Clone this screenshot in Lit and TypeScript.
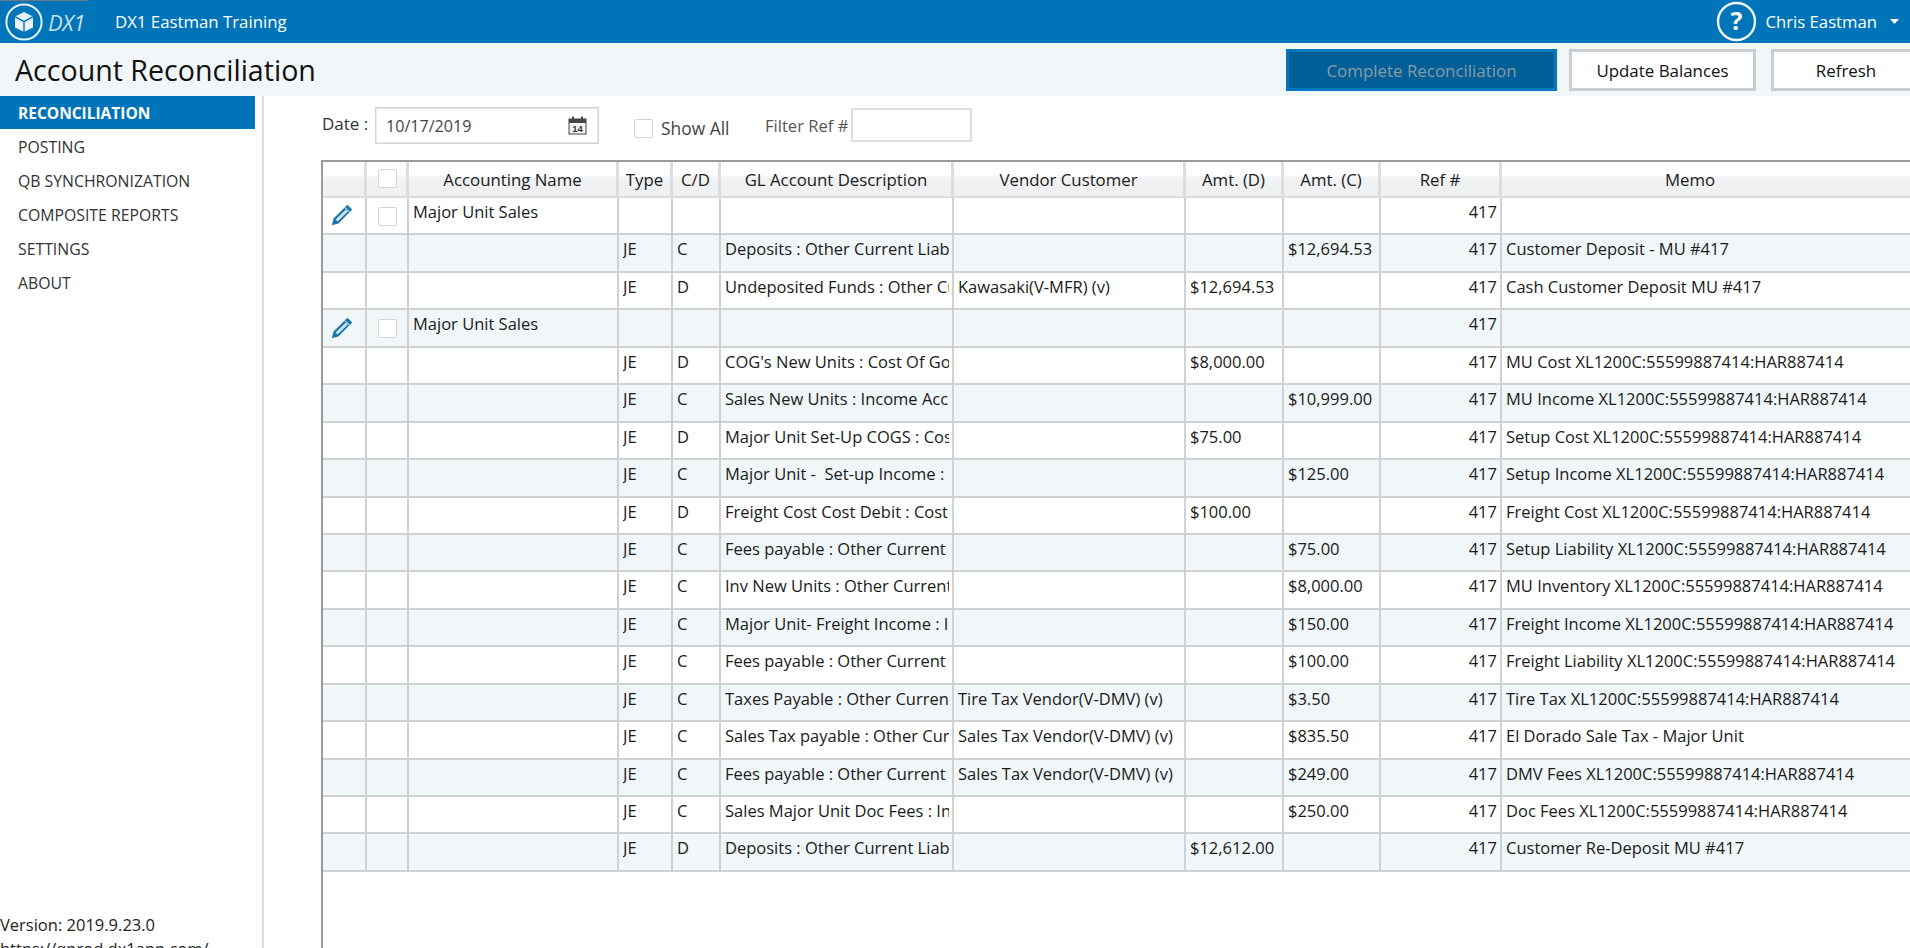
import { LitElement, html, css, svg } from "lit";
import { customElement } from "lit/decorators.js";

type Row = { parent?: boolean; name?: string; type?: string; cd?: string; gl?: string; vendor?: string; d?: string; c?: string; memo?: string };

const SFX = "XL1200C:55599887414:HAR887414";
const ROWS: Row[] = [
  { parent: true, name: "Major Unit Sales" },
  { type: "JE", cd: "C", gl: "Deposits : Other Current Liabilities", c: "$12,694.53", memo: "Customer Deposit - MU #417" },
  { type: "JE", cd: "D", gl: "Undeposited Funds : Other Current Assets", vendor: "Kawasaki(V-MFR) (v)", d: "$12,694.53", memo: "Cash Customer Deposit MU #417" },
  { parent: true, name: "Major Unit Sales" },
  { type: "JE", cd: "D", gl: "COG's New Units : Cost Of Goods Sold", d: "$8,000.00", memo: `MU Cost ${SFX}` },
  { type: "JE", cd: "C", gl: "Sales New Units : Income Account", c: "$10,999.00", memo: `MU Income ${SFX}` },
  { type: "JE", cd: "D", gl: "Major Unit Set-Up COGS : Cost Of Goods", d: "$75.00", memo: `Setup Cost ${SFX}` },
  { type: "JE", cd: "C", gl: "Major Unit -  Set-up Income : Income", c: "$125.00", memo: `Setup Income ${SFX}` },
  { type: "JE", cd: "D", gl: "Freight Cost Cost Debit : Cost Of Goods", d: "$100.00", memo: `Freight Cost ${SFX}` },
  { type: "JE", cd: "C", gl: "Fees payable : Other Current Liabilities", c: "$75.00", memo: `Setup Liability ${SFX}` },
  { type: "JE", cd: "C", gl: "Inv New Units : Other Current Assets", c: "$8,000.00", memo: `MU Inventory ${SFX}` },
  { type: "JE", cd: "C", gl: "Major Unit- Freight Income : Income", c: "$150.00", memo: `Freight Income ${SFX}` },
  { type: "JE", cd: "C", gl: "Fees payable : Other Current Liabilities", c: "$100.00", memo: `Freight Liability ${SFX}` },
  { type: "JE", cd: "C", gl: "Taxes Payable : Other Current Liabilities", vendor: "Tire Tax Vendor(V-DMV) (v)", c: "$3.50", memo: `Tire Tax ${SFX}` },
  { type: "JE", cd: "C", gl: "Sales Tax payable : Other Current Liabilities", vendor: "Sales Tax Vendor(V-DMV) (v)", c: "$835.50", memo: "El Dorado Sale Tax - Major Unit" },
  { type: "JE", cd: "C", gl: "Fees payable : Other Current Liabilities", vendor: "Sales Tax Vendor(V-DMV) (v)", c: "$249.00", memo: `DMV Fees ${SFX}` },
  { type: "JE", cd: "C", gl: "Sales Major Unit Doc Fees : Income", c: "$250.00", memo: `Doc Fees ${SFX}` },
  { type: "JE", cd: "D", gl: "Deposits : Other Current Liabilities", d: "$12,612.00", memo: "Customer Re-Deposit MU #417" },
];

const NAV = ["RECONCILIATION", "POSTING", "QB SYNCHRONIZATION", "COMPOSITE REPORTS", "SETTINGS", "ABOUT"];

const pencil = svg`<svg class="pencil" width="22" height="22" viewBox="0 0 22 22">
  <path d="M16.4 .8 21.2 5.6 7.4 19.4 .8 21.2 2.6 14.6Z" fill="#1b76ab"/>
  <path d="M14.8 5.4 16.8 7.4 6.6 17.4 4.6 15.4Z" fill="#cfe3ef"/>
  <path d="M13.8 3.4 18.6 8.2" stroke="#fff" stroke-width="1"/>
</svg>`;

@customElement("app-root")
export class AppRoot extends LitElement {
  static styles = css`
    :host {
      display: block;
      position: relative;
      width: 1910px;
      height: 948px;
      overflow: hidden;
      background: #fff;
      color: #111;
      font-family: "Open Sans", "Noto Sans", sans-serif;
      font-size: 16.5px;
    }
    .notch { position: absolute; left: 0; top: 0; width: 88px; height: 1px; background: #6a7a86; }
    .top {
      height: 43px;
      background: #0074b8;
      color: #fff;
      display: flex;
      align-items: center;
    }
    .logo { margin-left: 5px; display: block; }
    .dx { font-style: italic; font-size: 22px; letter-spacing: -0.5px; color: #c9dfee; margin-left: 5px; width: 67px; }
    .org { font-size: 16.8px; }
    .spacer { flex: 1; }
    .help { display: block; margin-right: 9px; }
    .user { font-size: 16.7px; }
    .caret { display: block; margin: 0 11px 0 13px; }

    .titlebar {
      height: 53px;
      background: #f1f6f9;
      display: flex;
      align-items: flex-start;
    }
    h1 { margin: 0 0 0 15px; font-weight: 400; font-size: 28.6px; line-height: 36px; padding-top: 9px; flex: 1; color: #111; }
    .btn {
      box-sizing: border-box;
      height: 42px;
      margin-top: 6px;
      border: 3px solid #c9ced3;
      background: #fff;
      font: inherit;
      font-size: 16.9px;
      color: #111;
      padding: 0;
      display: flex;
      align-items: center;
      justify-content: center;
    }
    .btn.primary { width: 271px; background: #005f97; border-color: #0079c0; color: #8b9ba6; margin-right: 12px; }
    .btn.update { width: 187px; margin-right: 15px; }
    .btn.refresh { width: 150px; margin-right: -11px; }

    .body { display: flex; height: 865px; }
    .side {
      width: 262px;
      border-right: 2px solid #dcdcdc;
      display: flex;
      flex-direction: column;
      flex: none;
    }
    .nav { width: 255px; height: 34px; padding: 2px 0 0 18px; box-sizing: border-box; display: flex; align-items: center; font-size: 15.8px; color: #333; }
    .nav.on { height: 33px; padding-top: 0; background: #0074b8; color: #fff; font-weight: 700; font-size: 15.5px; }
    .foot { margin-top: auto; line-height: 24px; font-size: 16.5px; color: #222; white-space: nowrap; }

    .main { flex: 1; min-width: 0; padding-left: 57px; }
    .tools { height: 64px; display: flex; align-items: flex-start; color: #333; }
    .date-label { margin: 17px 0 0 1px; width: 53px; font-size: 17px; line-height: 22px; white-space: nowrap; }
    .date {
      box-sizing: border-box;
      width: 224px;
      height: 37px;
      margin-top: 11px;
      border: 1px solid #d2d5d8;
      outline: 1px solid #e6e8ea;
      outline-offset: -2px;
      padding: 0 11px 0 10px;
      display: flex;
      align-items: center;
      justify-content: space-between;
      color: #444;
      font-size: 16.1px;
    }
    .check { box-sizing: border-box; width: 19px; height: 19px; border: 1.5px solid #d3d6d8; border-radius: 2px; background: #fff; flex: none; }
    .showall { display: flex; align-items: center; width: 131px; margin: 20px 0 0 35px; gap: 8px; font-size: 17.4px; color: #444; }
    .filter { display: flex; align-items: center; margin: 12px 0 0 0; gap: 3px; font-size: 16.6px; color: #555; }
    .filter-input { box-sizing: border-box; width: 121px; height: 34px; border: 2px solid #dcdee0; background: #fff; }

    .grid {
      width: 1700px;
      border-left: 2px solid #9a9a9a;
      border-top: 2px solid #9a9a9a;
      height: 800px;
    }
    .row {
      display: grid;
      grid-template-columns: 44px 42px 210px 54px 48px 233px 232px 98px 97px 121px 1fr;
      height: 37.44px;
      box-sizing: border-box;
      border-bottom: 2px solid #cfd2d4;
    }
    .row.alt { background: #f1f6f9; }
    .row.head {
      height: 36px;
      background: linear-gradient(#fff 0, #fff 13px, #f1f2f3 16px, #eff0f1 100%);
      border-bottom: 2px solid #dcdddf;
    }
    .c {
      min-width: 0;
      box-sizing: border-box;
      border-right: 2px solid #cfd2d4;
      padding: 2px 3px 0 4px;
      line-height: 24px;
      font-size: 16.5px;
      color: #1a1a1a;
    }
    .row.head .c {
      border-right: 3px solid #dcdddf;
      text-align: center;
      font-size: 16.8px;
      padding: 6px 0 0;
      white-space: nowrap;
    }
    .row.head .c.memo { border-right: none; width: 376px; }
    .c > div { overflow: hidden; white-space: pre; }
    .c.num { text-align: right; padding-right: 3px; }
    .c.last { border-right: none; }
    .c.ico { padding: 0; display: flex; align-items: center; justify-content: center; }
    .pencil { display: block; margin: -1px 0 0 -5px; }
    .row.head .c.hc { padding: 0 0 0 2px; display: flex; align-items: flex-start; justify-content: center; }
    .row.head .check { margin-top: 7px; }
    .row .c.ico .check { margin-top: 1px; }
  `;

  cell(v: string | undefined, cls = "") {
    return html`<div class="c ${cls}"><div>${v ?? ""}</div></div>`;
  }

  renderRow(r: Row, i: number) {
    return html`<div class="row ${i % 2 === 1 ? "alt" : ""}">
      <div class="c ico">${r.parent ? pencil : ""}</div>
      <div class="c ico">${r.parent ? html`<span class="check"></span>` : ""}</div>
      ${this.cell(r.name)}${this.cell(r.type)}${this.cell(r.cd)}${this.cell(r.gl)}${this.cell(r.vendor)}${this.cell(r.d)}${this.cell(r.c)}
      ${this.cell("417", "num")}${this.cell(r.memo, "last")}
    </div>`;
  }

  render() {
    return html`
      <div class="notch"></div>
      <header class="top">
        <svg class="logo" width="38" height="38" viewBox="0 0 38 38">
          <circle cx="19" cy="19" r="17.6" fill="none" stroke="#e6f1f8" stroke-width="2"/>
          <path d="M19 9 28 13.6 28 24.4 19 29 10 24.4 10 13.6Z" fill="#eaf3f9"/>
          <path d="M10 13.6 19 18.6 28 13.6M19 18.6V29" fill="none" stroke="#0074b8" stroke-width="1.4"/>
        </svg>
        <span class="dx">DX1</span>
        <span class="org">DX1 Eastman Training</span>
        <span class="spacer"></span>
        <svg class="help" width="41" height="41" viewBox="0 0 41 41">
          <circle cx="20.5" cy="20.5" r="18.5" fill="none" stroke="#f2f7fb" stroke-width="2.4"/>
          <text x="20.5" y="29" text-anchor="middle" fill="#fff" font-size="25" font-weight="700" font-family="Open Sans, sans-serif">?</text>
        </svg>
        <span class="user">Chris Eastman</span>
        <svg class="caret" width="9" height="5" viewBox="0 0 9 5"><path d="M0 0H9L4.5 5Z" fill="#fff"/></svg>
      </header>
      <div class="titlebar">
        <h1>Account Reconciliation</h1>
        <button class="btn primary">Complete Reconciliation</button>
        <button class="btn update">Update Balances</button>
        <button class="btn refresh">Refresh</button>
      </div>
      <div class="body">
        <aside class="side">
          ${NAV.map((n, i) => html`<div class="nav ${i === 0 ? "on" : ""}">${n}</div>`)}
          <div class="foot">Version: 2019.9.23.0<br />https://qprod.dx1app.com/</div>
        </aside>
        <main class="main">
          <div class="tools">
            <span class="date-label">Date :</span>
            <div class="date">
              <span>10/17/2019</span>
              <svg width="19" height="19" viewBox="0 0 19 19">
                <rect x="1" y="3" width="17" height="15" fill="#f4f4f4" stroke="#444" stroke-width="1"/>
                <rect x="1" y="3" width="17" height="4" fill="#444"/>
                <rect x="4" y="0.5" width="2" height="4.5" fill="#444"/>
                <rect x="13" y="0.5" width="2" height="4.5" fill="#444"/>
                <text x="9.5" y="16" text-anchor="middle" font-size="9.5" font-weight="700" fill="#333" font-family="Liberation Sans, sans-serif">14</text>
              </svg>
            </div>
            <label class="showall"><span class="check"></span>Show All</label>
            <div class="filter">Filter Ref #<span class="filter-input"></span></div>
          </div>
          <div class="grid">
            <div class="row head">
              <div class="c"></div>
              <div class="c hc"><span class="check"></span></div>
              <div class="c">Accounting Name</div>
              <div class="c">Type</div>
              <div class="c">C/D</div>
              <div class="c">GL Account Description</div>
              <div class="c">Vendor Customer</div>
              <div class="c">Amt. (D)</div>
              <div class="c">Amt. (C)</div>
              <div class="c">Ref #</div>
              <div class="c memo">Memo</div>
            </div>
            ${ROWS.map((r, i) => this.renderRow(r, i))}
          </div>
        </main>
      </div>
    `;
  }
}
